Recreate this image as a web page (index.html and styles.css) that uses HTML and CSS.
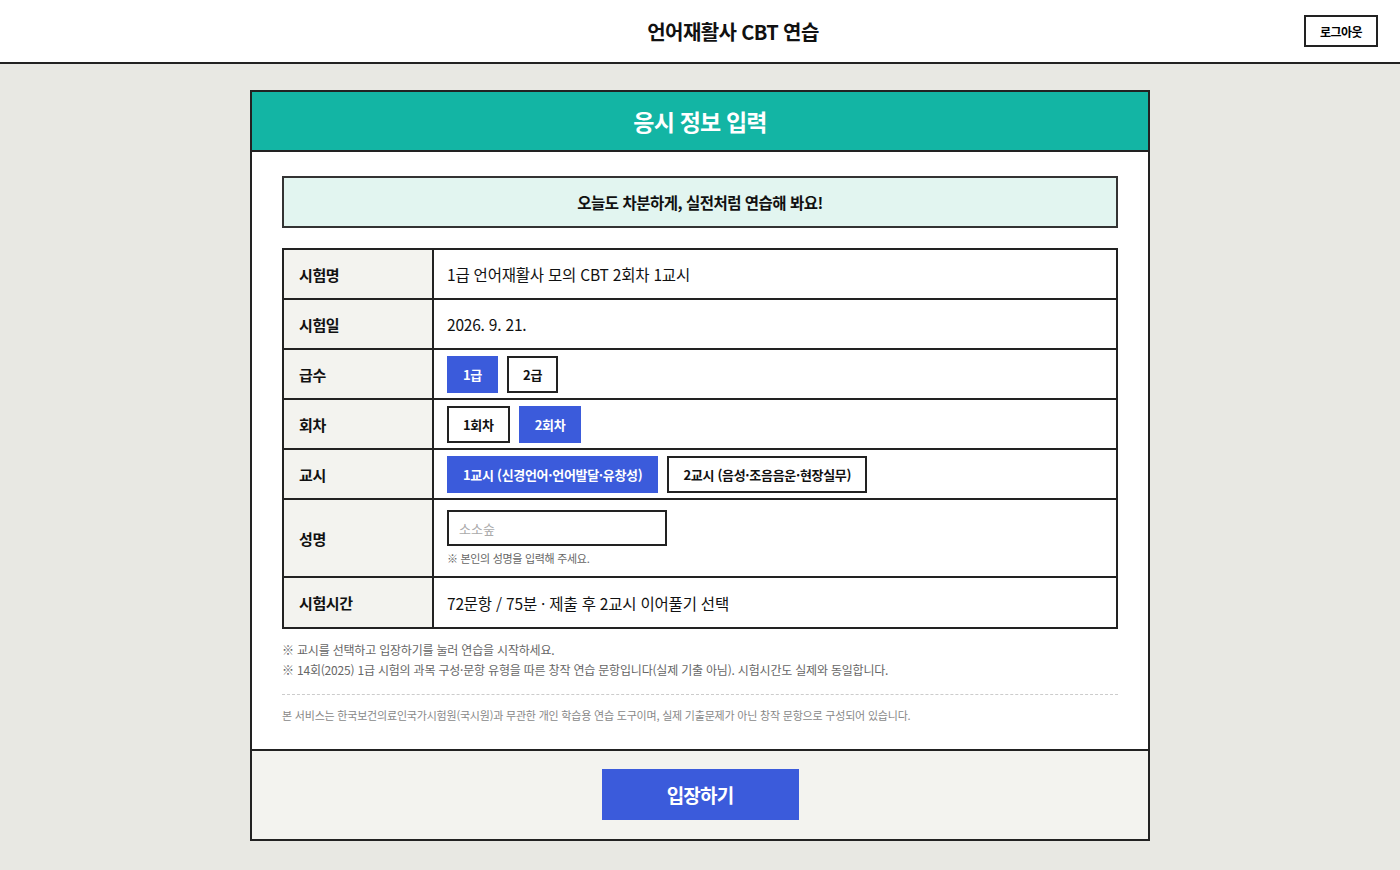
FILE: index.html
```html
<!DOCTYPE html>
<html lang="ko">
<head>
    <meta charset="utf-8">
    <title>언어재활사 CBT 연습</title>
    <link rel="stylesheet" href="styles.css">
</head>
<body>
    <div class="header">
        <h1 class="site-title">언어재활사 CBT 연습</h1>
        <button class="logout-button">로그아웃</button>
    </div>

    <div class="page">
        <div class="card">
            <div class="card-head">응시 정보 입력</div>

            <div class="card-body">
                <div class="banner">오늘도 차분하게, 실전처럼 연습해 봐요!</div>

                <table class="info-table">
                    <tr>
                        <th>시험명</th>
                        <td>1급 언어재활사 모의 CBT 2회차 1교시</td>
                    </tr>
                    <tr>
                        <th>시험일</th>
                        <td>2026. 9. 21.</td>
                    </tr>
                    <tr>
                        <th>급수</th>
                        <td>
                            <div class="choices">
                                <button class="choice active">1급</button>
                                <button class="choice">2급</button>
                            </div>
                        </td>
                    </tr>
                    <tr>
                        <th>회차</th>
                        <td>
                            <div class="choices">
                                <button class="choice">1회차</button>
                                <button class="choice active">2회차</button>
                            </div>
                        </td>
                    </tr>
                    <tr>
                        <th>교시</th>
                        <td>
                            <div class="choices">
                                <button class="choice active">1교시 (신경언어·언어발달·유창성)</button>
                                <button class="choice">2교시 (음성·조음음운·현장실무)</button>
                            </div>
                        </td>
                    </tr>
                    <tr class="name-row">
                        <th>성명</th>
                        <td>
                            <input type="text" class="name-input" placeholder="소소숲">
                            <div class="hint">※ 본인의 성명을 입력해 주세요.</div>
                        </td>
                    </tr>
                    <tr class="last-row">
                        <th>시험시간</th>
                        <td>72문항 / 75분 · 제출 후 2교시 이어풀기 선택</td>
                    </tr>
                </table>

                <div class="notes">
                    <p>※ 교시를 선택하고 입장하기를 눌러 연습을 시작하세요.</p>
                    <p>※ 14회(2025) 1급 시험의 과목 구성·문항 유형을 따른 창작 연습 문항입니다(실제 기출 아님). 시험시간도 실제와 동일합니다.</p>
                </div>

                <div class="disclaimer">본 서비스는 한국보건의료인국가시험원(국시원)과 무관한 개인 학습용 연습 도구이며, 실제 기출문제가 아닌 창작 문항으로 구성되어 있습니다.</div>
            </div>

            <div class="card-foot">
                <button class="enter-button">입장하기</button>
            </div>
        </div>
    </div>

    <script>
        // choice buttons: one active per row
        document.querySelectorAll('.choices').forEach(group => {
            group.addEventListener('click', (e) => {
                const btn = e.target.closest('.choice');
                if (!btn) return;
                group.querySelectorAll('.choice').forEach(b => b.classList.remove('active'));
                btn.classList.add('active');
            });
        });
    </script>
</body>
</html>
```

FILE: styles.css
```css
:root {
    --line: #222;
    --teal: #13b5a4;
    --blue: #3b5bdb;
    --page-bg: #e8e8e3;
    --label-bg: #f3f3ef;
    --banner-bg: #e2f5f0;
    --muted: #666;
}

* {
    box-sizing: border-box;
}

body {
    font-family: "Noto Sans CJK KR", "Noto Sans", sans-serif;
    margin: 0;
    padding: 0;
    background-color: var(--page-bg);
    color: #111;
}

.header {
    height: 64px;
    background-color: #fff;
    border-bottom: 2px solid var(--line);
    display: flex;
    align-items: center;
    padding: 0 22px 0 162px;
}

.site-title {
    flex: 1;
    margin: 0;
    text-align: center;
    font-size: 20px;
    font-weight: 700;
    letter-spacing: -0.6px;
}

.logout-button {
    width: 74px;
    height: 32px;
    background: #fff;
    border: 2px solid var(--line);
    font-family: inherit;
    font-size: 12px;
    font-weight: 700;
    letter-spacing: -0.5px;
    cursor: pointer;
}

.page {
    padding: 26px 0 30px;
}

.card {
    width: 900px;
    margin: 0 auto;
    border: 2px solid var(--line);
    background-color: #fff;
}

.card-head {
    height: 60px;
    background-color: var(--teal);
    border-bottom: 2px solid var(--line);
    color: #fff;
    font-size: 23px;
    font-weight: 700;
    letter-spacing: -0.8px;
    display: flex;
    align-items: center;
    justify-content: center;
}

.card-body {
    padding: 24px 30px 26px;
}

.banner {
    height: 52px;
    background-color: var(--banner-bg);
    border: 2px solid #333;
    display: flex;
    align-items: center;
    justify-content: center;
    font-size: 15.5px;
    font-weight: 700;
    letter-spacing: -0.5px;
}

.info-table {
    width: 100%;
    margin-top: 20px;
    border-collapse: collapse;
    border: 2px solid var(--line);
}

.info-table th,
.info-table td {
    border: 2px solid var(--line);
    height: 50px;
    padding: 0 13px;
    text-align: left;
    vertical-align: middle;
}

.info-table th {
    width: 150px;
    padding-left: 15px;
    background-color: var(--label-bg);
    font-size: 15px;
    font-weight: 700;
    letter-spacing: -0.4px;
}

.info-table td {
    font-size: 15.5px;
    letter-spacing: -0.2px;
}

.choices {
    display: flex;
    gap: 9px;
}

.choice {
    height: 37px;
    padding: 0 14px;
    background: #fff;
    border: 2px solid var(--line);
    font-family: inherit;
    font-size: 13px;
    font-weight: 700;
    letter-spacing: -0.3px;
    color: #111;
    cursor: pointer;
}

.choice.active {
    background-color: var(--blue);
    border-color: var(--blue);
    color: #fff;
}

.name-row th,
.name-row td {
    height: 78px;
}

.last-row th,
.last-row td {
    height: 51px;
}

.name-input {
    display: block;
    width: 220px;
    height: 36px;
    border: 2px solid var(--line);
    padding: 0 10px;
    font-family: inherit;
    font-size: 13px;
    outline: none;
}

.name-input::placeholder {
    color: #aaa;
}

.hint {
    margin-top: 4px;
    font-size: 11px;
    color: var(--muted);
    letter-spacing: -0.3px;
}

.notes {
    margin-top: 11px;
    font-size: 12px;
    color: var(--muted);
    letter-spacing: -0.2px;
    padding-bottom: 14px;
    border-bottom: 1px dashed #ccc;
}

.notes p {
    margin: 0;
    line-height: 20px;
}

.disclaimer {
    margin-top: 12px;
    font-size: 11px;
    color: #888;
    letter-spacing: -0.2px;
}

.card-foot {
    background-color: var(--label-bg);
    border-top: 2px solid var(--line);
    padding: 18px 0 19px;
    display: flex;
    justify-content: center;
}

.enter-button {
    width: 197px;
    height: 51px;
    background-color: var(--blue);
    border: none;
    color: #fff;
    font-family: inherit;
    font-size: 19px;
    font-weight: 700;
    letter-spacing: -0.8px;
    cursor: pointer;
}
```
